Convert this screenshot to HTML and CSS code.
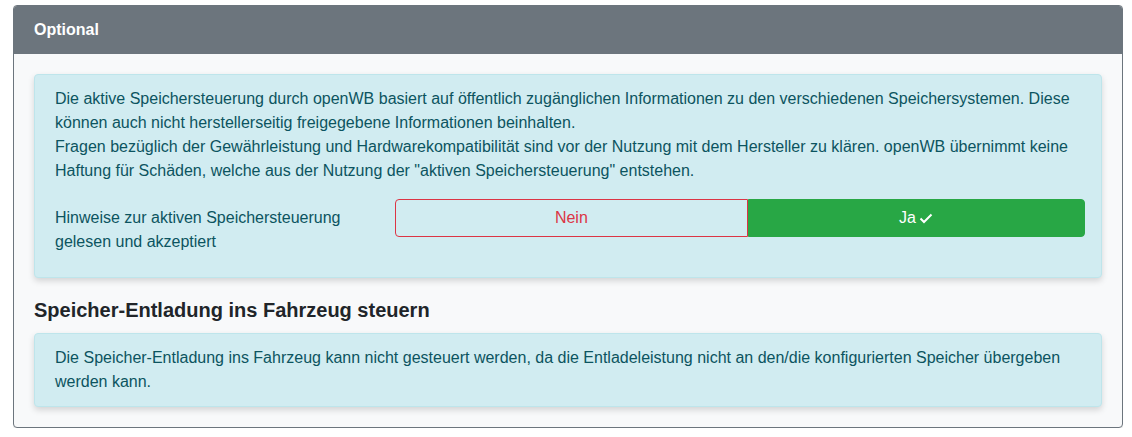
FILE: index.html
```html
<!DOCTYPE html>
<html lang="de">
<head>
    <meta charset="UTF-8">
    <meta name="viewport" content="width=device-width, initial-scale=1.0">
    <title>Optional</title>
    <link rel="stylesheet" href="styles.css">
</head>
<body>
    <div class="card">
        <div class="card-header">Optional</div>
        <div class="card-body">
            <div class="alert">
                <p>Die aktive Speichersteuerung durch openWB basiert auf öffentlich zugänglichen Informationen zu den verschiedenen Speichersystemen. Diese können auch nicht herstellerseitig freigegebene Informationen beinhalten.<br>Fragen bezüglich der Gewährleistung und Hardwarekompatibilität sind vor der Nutzung mit dem Hersteller zu klären. openWB übernimmt keine Haftung für Schäden, welche aus der Nutzung der "aktiven Speichersteuerung" entstehen.</p>
                <div class="form-row">
                    <label class="form-label">Hinweise zur aktiven Speichersteuerung gelesen und akzeptiert</label>
                    <div class="btn-group">
                        <button class="btn btn-no">Nein</button>
                        <button class="btn btn-yes">Ja<svg class="check" viewBox="0 0 16 16" width="16" height="16"><path d="M2.5 8.5l3.5 3.5 7.5-7.5" fill="none" stroke="currentColor" stroke-width="2"/></svg></button>
                    </div>
                </div>
            </div>
            <h3 class="section-title">Speicher-Entladung ins Fahrzeug steuern</h3>
            <div class="alert alert-last">
                <p>Die Speicher-Entladung ins Fahrzeug kann nicht gesteuert werden, da die Entladeleistung nicht an den/die konfigurierten Speicher übergeben werden kann.</p>
            </div>
        </div>
    </div>
</body>
</html>
```

FILE: styles.css
```css
body {
    margin: 5px 9px 0 13px;
    background-color: #fff;
    font-family: 'Liberation Sans', Arial, sans-serif;
    font-size: 16px;
    line-height: 24px;
}

.card {
    border: 1px solid #6c757d;
    border-radius: 4px;
    background-color: #f8f9fa;
    overflow: hidden;
    box-shadow: 0 1px 3px rgba(0, 0, 0, 0.1);
}

.card-header {
    background-color: #6c757d;
    color: #fff;
    font-weight: bold;
    padding: 12px 20px;
    height: 24px;
}

.card-body {
    padding: 20px;
}

.alert {
    background-color: #d1ecf1;
    color: #0c5460;
    border: 1px solid #bee5eb;
    border-radius: 4px;
    padding: 12px 20px 23px 20px;
    box-shadow: 0 3px 6px rgba(0, 0, 0, 0.15);
}

.alert p {
    margin: 0 0 16px 0;
}

.alert-last {
    padding-bottom: 12px;
}

.alert-last p {
    margin: 0;
}

.form-row {
    display: flex;
    align-items: flex-start;
}

.form-label {
    width: 320px;
    margin-right: 20px;
    padding-top: 7px;
}

.btn-group {
    display: flex;
    flex: 1;
    margin-right: -4px;
}

.btn {
    height: 38px;
    font-family: inherit;
    font-size: 16px;
    border: 1px solid transparent;
    cursor: pointer;
    display: flex;
    justify-content: center;
    align-items: center;
}

.btn-no {
    flex: 353 1 0;
    background-color: transparent;
    color: #dc3545;
    border-color: #dc3545;
    border-radius: 4px 0 0 4px;
}

.btn-yes {
    flex: 337 1 0;
    background-color: #28a745;
    border-color: #28a745;
    color: #fff;
    border-radius: 0 4px 4px 0;
}

.check {
    margin-left: 2px;
}

.section-title {
    margin: 20px 0 11px 0;
    font-size: 20px;
    line-height: 24px;
    color: #212529;
}
```
